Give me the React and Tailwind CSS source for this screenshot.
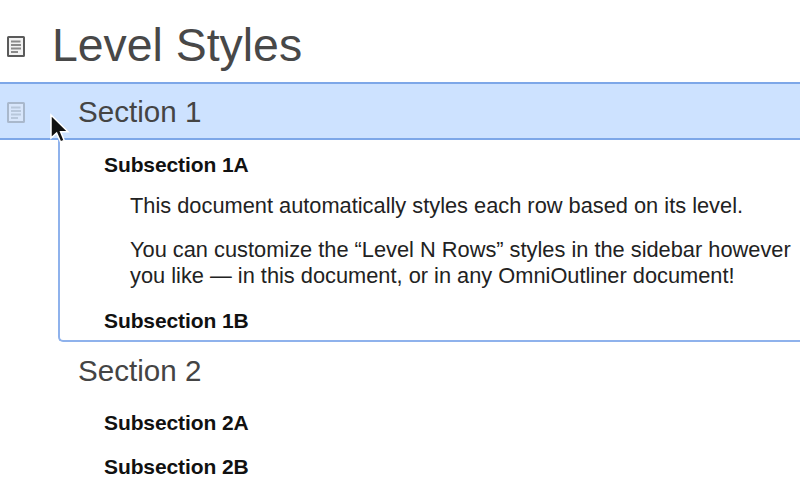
function DocIcon({ dim }) {
  return (
    <svg width="20" height="23" viewBox="0 0 20 23" className={dim ? "opacity-30" : "opacity-100"}>
      <rect x="2" y="2" width="16" height="19" rx="0.5" fill="#f2f2f2" stroke="#5a5a5a" strokeWidth="2" />
      <path d="M5 6.5H14.5M5 10H15M5 13.5H15M5 17H12" stroke="#8a8a8a" strokeWidth="1.8" fill="none" />
    </svg>
  );
}

function Cursor() {
  return (
    <svg width="24" height="34" viewBox="0 0 24 34" className="absolute left-[49px] top-[29px]">
      <path d="M2 2V25L7.6 20L11.6 29L15.2 27.4L11.6 18.8H19Z" fill="#111" stroke="#fff" strokeWidth="1.5" />
    </svg>
  );
}

const sub = "text-[21px] leading-[24px] font-bold text-[#111] pl-[104px] tracking-[-0.1px] whitespace-nowrap";
const para = "text-[21.8px] leading-[26px] text-[#222] pl-[130px] whitespace-nowrap";
const sec = "text-[29.6px] leading-[32px] text-[#444]";

export default function App() {
  return (
    <div className="w-[800px] h-[496px] overflow-hidden bg-white relative font-['Liberation_Sans',Arial,sans-serif]">
      <div className="h-[82px] flex items-start pt-[18px]">
        <div className="w-[52px] pl-[6px] pt-[17px]"><DocIcon /></div>
        <div className="text-[46.4px] leading-[54px] text-[#484848]">Level Styles</div>
      </div>
      <div className="h-[58px] relative flex items-center bg-[#cde2ff] border-y-2 border-[#7da7e8]">
        <div className="w-[78px] pl-[6px] pt-[3px]"><DocIcon dim /></div>
        <div className={`${sec} pt-[1px]`}>Section 1</div>
        <Cursor />
      </div>
      <div className="ml-[58px] h-[202px] border-l-2 border-b-2 border-[#8fb2ec] rounded-bl-[5px]">
        <div className="-ml-[60px] pt-[13px]">
          <div className={sub}>Subsection 1A</div>
          <div className={`${para} mt-[16px]`}>This document automatically styles each row based on its level.</div>
          <div className={`${para} mt-[18px]`}>
            You can customize the “Level N Rows” styles in the sidebar however<br />
            you like — in this document, or in any OmniOutliner document!
          </div>
          <div className={`${sub} mt-[20px]`}>Subsection 1B</div>
        </div>
      </div>
      <div className={`${sec} pl-[78px] mt-[13px]`}>Section 2</div>
      <div className={`${sub} mt-[24px]`}>Subsection 2A</div>
      <div className={`${sub} mt-[20px]`}>Subsection 2B</div>
    </div>
  );
}
